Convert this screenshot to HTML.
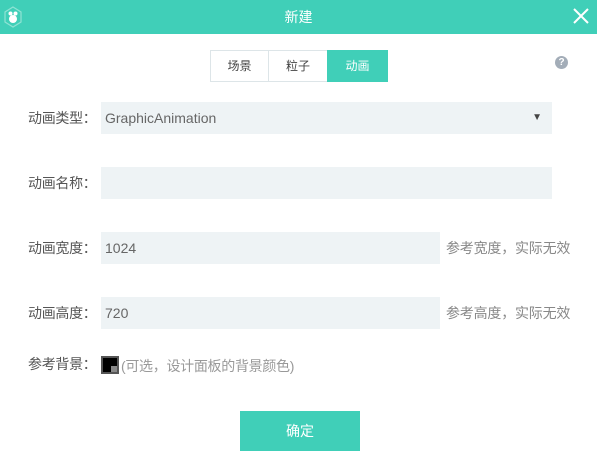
<!DOCTYPE html>
<html><head><meta charset="utf-8"><style>
*{margin:0;padding:0;box-sizing:border-box}
body{width:597px;height:476px;background:#fff;font-family:"Liberation Sans","Noto Sans CJK SC",sans-serif;position:relative;overflow:hidden;color:#555}
.top{position:absolute;left:0;top:0;width:597px;height:34px;background:#40cfb8;color:#fff;text-align:center;line-height:34px;font-size:14px}
.abs{position:absolute}
.lbl{position:absolute;left:28px;font-size:14px;color:#555;height:32px;line-height:32px;letter-spacing:-0.3px}
.inp{position:absolute;left:101px;background:#eef3f5;height:32px;font-size:14px;color:#666;line-height:32px;padding-left:4px}
.hint{position:absolute;left:446px;font-size:14px;color:#888;height:32px;line-height:32px;letter-spacing:-0.2px}
.tab{position:absolute;top:50px;height:32px;line-height:31px;text-align:center;font-size:12px;border:1px solid #dde5e8;color:#444}
</style></head><body>
<div class="top">新建</div>
<svg class="abs" style="left:4px;top:6px" width="18" height="22" viewBox="0 0 18 22"><path d="M9 1L17 6V16L9 21L1 16V6Z" fill="none" stroke="#8fe3d4" stroke-width="1.2"/><circle cx="9" cy="13" r="4" fill="#fff"/><circle cx="6.5" cy="7.5" r="2" fill="#fff"/><circle cx="11.5" cy="7.5" r="2" fill="#fff"/></svg>
<svg class="abs" style="left:573px;top:8px" width="16" height="16" viewBox="0 0 16 16"><path d="M1 1L15 15M15 1L1 15" stroke="#fff" stroke-width="2"/></svg>
<div class="tab" style="left:210px;width:59px">场景</div>
<div class="tab" style="left:268px;width:60px">粒子</div>
<div class="tab" style="left:327px;width:61px;background:#40cfb8;border-color:#40cfb8;color:#fff">动画</div>
<div class="abs" style="left:555px;top:56px;width:13px;height:13px;border-radius:50%;background:#a3adb8;color:#fff;font-size:10px;font-weight:bold;text-align:center;line-height:13px">?</div>
<div class="lbl" style="top:102px">动画类型：</div>
<div class="inp" style="top:102px;width:451px">GraphicAnimation<span style="position:absolute;right:10px;font-size:10px;color:#444">▼</span></div>
<div class="lbl" style="top:167px">动画名称：</div>
<div class="inp" style="top:167px;width:451px"></div>
<div class="lbl" style="top:232px">动画宽度：</div>
<div class="inp" style="top:232px;width:339px">1024</div>
<div class="hint" style="top:232px">参考宽度，实际无效</div>
<div class="lbl" style="top:297px">动画高度：</div>
<div class="inp" style="top:297px;width:339px">720</div>
<div class="hint" style="top:297px">参考高度，实际无效</div>
<div class="lbl" style="top:348px">参考背景：</div>
<div class="abs" style="left:101px;top:356px;width:18px;height:18px;background:#000;border:2px solid #555"><div style="position:absolute;right:0;bottom:0;width:6px;height:6px;background:#888"></div></div>
<div class="abs" style="left:121px;top:356px;font-size:14px;color:#999;letter-spacing:-0.3px">(可选，设计面板的背景颜色)</div>
<div class="abs" style="left:240px;top:411px;width:120px;height:40px;background:#40cfb8;color:#fff;text-align:center;line-height:40px;font-size:14px">确定</div>
</body></html>
